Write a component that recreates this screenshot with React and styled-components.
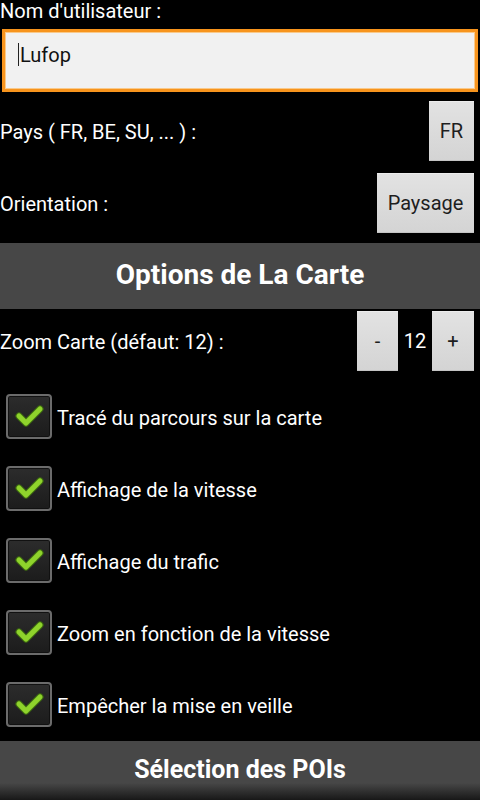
import React from 'react'
import styled, { createGlobalStyle } from 'styled-components'

const GlobalStyle = createGlobalStyle`
    html, body {
        margin: 0;
        padding: 0;
        background: #000;
        font-family: Roboto, "Liberation Sans", sans-serif;
    }
`

const options = [
    'Tracé du parcours sur la carte',
    'Affichage de la vitesse',
    'Affichage du trafic',
    'Zoom en fonction de la vitesse',
    'Empêcher la mise en veille',
]

const Check = () => (
    <svg width="30" height="26" viewBox="0 0 30 26">
        <polyline points="5,13 12,20 26,6" fill="none" stroke="#3f6e10" strokeWidth="7" strokeLinecap="round" strokeLinejoin="round" />
        <polyline points="5,13 12,20 26,6" fill="none" stroke="#8fd32c" strokeWidth="5" strokeLinecap="round" strokeLinejoin="round" />
    </svg>
)

const App = () => {
    return (
        <Screen>
            <GlobalStyle />
            <Label>Nom d'utilisateur :</Label>
            <Input>
                <Caret />
                <span>Lufop</span>
            </Input>

            <Row $top={9}>
                <Label>Pays ( FR, BE, SU, ... ) :</Label>
                <Button $width={45}>FR</Button>
            </Row>
            <Row $top={12}>
                <Label>Orientation :</Label>
                <Button $width={97}>Paysage</Button>
            </Row>

            <Header>Options de La Carte</Header>

            <Row $top={2}>
                <Label>Zoom Carte (défaut: 12) :</Label>
                <Stepper>
                    <Button $width={41}>-</Button>
                    <Value>12</Value>
                    <Button $width={42}>+</Button>
                </Stepper>
            </Row>

            <CheckList>
                {options.map(text => (
                    <CheckRow key={text}>
                        <Box><Check /></Box>
                        <span>{text}</span>
                    </CheckRow>
                ))}
            </CheckList>

            <Header $fade>Sélection des POIs</Header>
        </Screen>
    )
}

const Screen = styled.div`
    width: 480px;
    height: 800px;
    overflow: hidden;
    background: #000;
    color: #fff;
`

const Label = styled.div`
    font-size: 20px;
    line-height: 23px;
    color: #fff;
    white-space: nowrap;
`

const Input = styled.div`
    margin: 6px 2px 0 2px;
    border: 3px solid #f7941d;
    box-shadow: inset 0 0 0 1px #f9c98a;
    background: #f1f1f1;
    display: flex;
    align-items: flex-start;
    padding: 11px 0 0 13px;
    box-sizing: content-box;
    height: 46px;
    color: #111;
    font-size: 20px;
    line-height: 24px;
`

const Caret = styled.div`
    width: 1px;
    height: 23px;
    background: #222;
    margin-right: 1px;
`

const Row = styled.div`
    display: flex;
    align-items: center;
    justify-content: space-between;
    margin-top: ${p => p.$top}px;
    padding-right: 6px;

    & > ${Label} {
        padding-top: 3px;
    }
`

const Button = styled.div`
    width: ${p => p.$width}px;
    height: 60px;
    display: flex;
    align-items: center;
    justify-content: center;
    background: linear-gradient(#e2e2e2, #d4d4d4);
    border-top: 1px solid #ececec;
    border-bottom: 1px solid #c4c4c4;
    box-sizing: border-box;
    color: #1e1e1e;
    font-size: 20px;
`

const Stepper = styled.div`
    display: flex;
    align-items: center;
`

const Value = styled.div`
    width: 34px;
    text-align: center;
    font-size: 20px;
    color: #fff;
`

const Header = styled.div`
    margin-top: 10px;
    height: 66px;
    display: flex;
    align-items: center;
    justify-content: center;
    padding-bottom: ${p => (p.$fade ? 9 : 4)}px;
    box-sizing: border-box;
    background: ${p => (p.$fade
        ? 'linear-gradient(#474747 0px, #474747 42px, #151515 60px)'
        : '#474747')};
    color: #fff;
    font-size: ${p => (p.$fade ? 25 : 28)}px;
    font-weight: bold;
`

const CheckList = styled.div`
    margin-top: 9px;
    & + ${Header} {
        margin-top: 1px;
    }
`

const CheckRow = styled.div`
    height: 72px;
    display: flex;
    align-items: center;
    gap: 5px;
    padding-left: 6px;
    font-size: 20px;
    color: #fff;

    & > span {
        padding-top: 3px;
    }
`

const Box = styled.div`
    width: 46px;
    height: 45px;
    box-sizing: border-box;
    border: 2px solid #6b6b6b;
    border-radius: 4px;
    background: linear-gradient(#2c2c2c, #1c1c1c);
    box-shadow: inset 0 0 0 1px #111;
    display: flex;
    align-items: center;
    justify-content: center;
`

export default App
